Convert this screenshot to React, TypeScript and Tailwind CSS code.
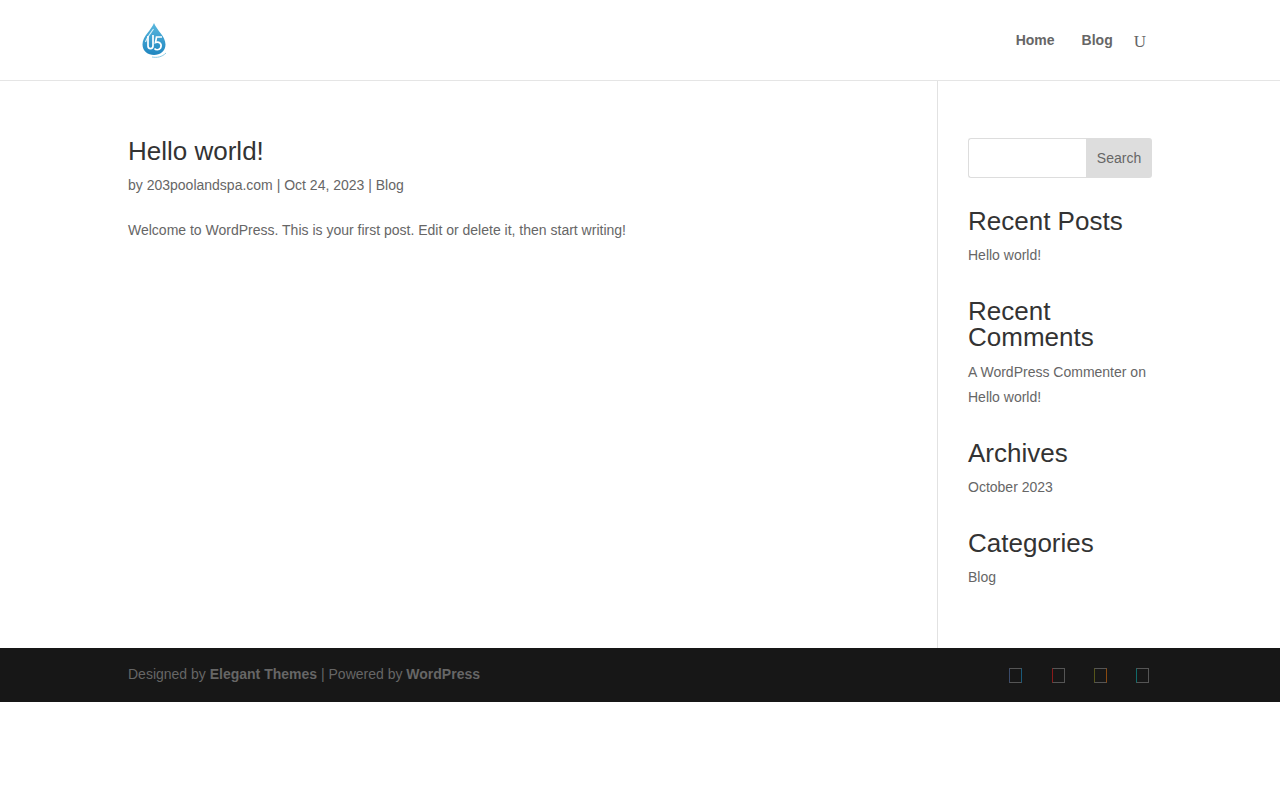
export default function App() {
  const links = "text-[#666]";
  const Heading = ({ children, pb = "pb-[9px]" }: { children: React.ReactNode; pb?: string }) => (
    <h4 className={`text-[26px] leading-[26px] text-[#333] ${pb}`}>{children}</h4>
  );
  return (
    <div className="font-['Liberation_Sans',Arial,sans-serif] text-[14px] text-[#666] bg-white min-h-[800px]">
      <header className="h-[81px] border-b border-[#e5e5e5]">
        <div className="w-[1024px] mx-auto flex items-center justify-between h-[80px]">
          <div className="pl-[12px] flex items-center">
            <svg width="28" height="38" viewBox="0 0 28 38">
              <defs>
                <linearGradient id="drop" x1="0" y1="0" x2="0" y2="1">
                  <stop offset="0" stopColor="#5bb8de" />
                  <stop offset="1" stopColor="#1f86c0" />
                </linearGradient>
              </defs>
              <path d="M14 2 C11.5 9 2.5 15 2.5 23.5 C2.5 30 8 34 14 34 C20 34 25.5 30 25.5 23.5 C25.5 15 16.5 9 14 2 Z" fill="url(#drop)" />
              <path d="M13.5 8 C11 12 7 16 5.5 21" stroke="#d8eff8" strokeWidth="1.1" fill="none" />
              <path d="M8 15 L8 25 C8 28.5 13 28.5 13 25 L13 14" stroke="#ffffff" strokeWidth="1.7" fill="none" />
              <path d="M22 16 L16.5 16 L15.5 21.5 C19 20 22.5 23 20.5 27 C19 29.5 15.5 29 14.5 27.5" stroke="#ffffff" strokeWidth="1.7" fill="none" />
              <path d="M12 36 C17 37 22 36 26 32" stroke="#8fcde6" strokeWidth="1" fill="none" />
            </svg>
          </div>
          <nav className="flex items-center font-bold text-[14px] pr-[6px]">
            <a className={links}>Home</a>
            <a className={`${links} ml-[27px]`}>Blog</a>
            <span className="ml-[21px] font-['Liberation_Serif',serif] font-normal text-[17px] leading-none mt-[2px]">U</span>
          </nav>
        </div>
      </header>
      <main className="w-[1024px] mx-auto flex h-[567px]">
        <div className="w-[810px] border-r border-[#e2e2e2] pt-[54px]">
          <h1 className="text-[26px] leading-[32px] text-[#333]">Hello world!</h1>
          <p className="mt-[6px] leading-[24px]">by 203poolandspa.com | Oct 24, 2023 | Blog</p>
          <p className="mt-[21px] leading-[24px]">Welcome to WordPress. This is your first post. Edit or delete it, then start writing!</p>
        </div>
        <aside className="flex-1 pl-[30px] pt-[57px]">
          <form className="flex h-[40px]">
            <input className="w-[118px] h-[40px] border border-[#ddd] border-r-0 rounded-l-[3px] bg-white" />
            <button className="w-[66px] h-[40px] bg-[#ddd] rounded-r-[3px] text-[14px] text-[#666]">Search</button>
          </form>
          <section className="mt-[30px]">
            <Heading>Recent Posts</Heading>
            <p className="leading-[25px]">Hello world!</p>
          </section>
          <section className="mt-[30px]">
            <Heading pb="pb-[10px]">Recent Comments</Heading>
            <p className="leading-[25px]">A WordPress Commenter on Hello world!</p>
          </section>
          <section className="mt-[30px]">
            <Heading>Archives</Heading>
            <p className="leading-[25px]">October 2023</p>
          </section>
          <section className="mt-[30px]">
            <Heading>Categories</Heading>
            <p className="leading-[25px]">Blog</p>
          </section>
        </aside>
      </main>
      <footer className="h-[54px] bg-[#171717]">
        <div className="w-[1024px] mx-auto h-full flex items-center justify-between text-[#666]">
          <p className="mb-[2px]">
            Designed by <b>Elegant Themes</b> | Powered by <b>WordPress</b>
          </p>
          <div className="flex pr-[3px] mt-[1px]">
            <span className="block w-[13px] h-[15px] border border-[#555] border-l-[#3a4a6a] border-r-[#1a5a7a]" />
            <span className="block ml-[30px] w-[13px] h-[15px] border border-[#555] border-l-[#8a1a1a]" />
            <span className="block ml-[29px] w-[13px] h-[15px] border border-[#555] border-l-[#55551a] border-r-[#8a4a10]" />
            <span className="block ml-[29px] w-[13px] h-[15px] border border-[#555] border-l-[#106a6a]" />
          </div>
        </div>
      </footer>
    </div>
  );
}
